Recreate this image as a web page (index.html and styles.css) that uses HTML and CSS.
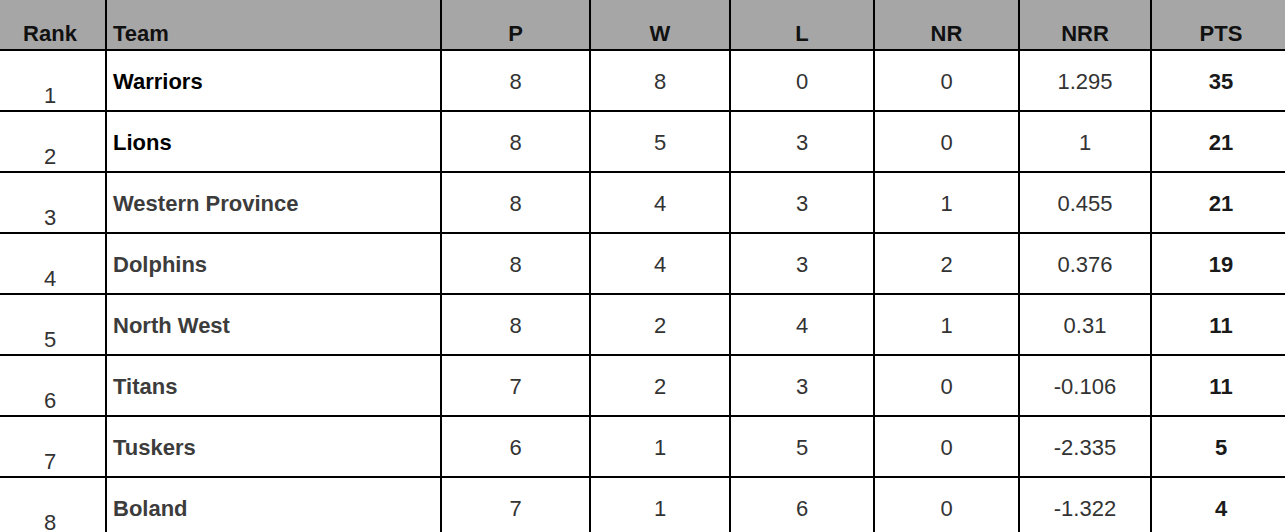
FILE: index.html
```html
<!DOCTYPE html>
<html>
<head>
<meta charset="utf-8">
<link rel="stylesheet" href="styles.css">
</head>
<body>
<table class="standings">
  <colgroup>
    <col class="c-rank"><col class="c-team"><col class="c-p"><col class="c-w"><col class="c-l"><col class="c-nr"><col class="c-nrr"><col class="c-pts">
  </colgroup>
  <thead>
    <tr>
      <th class="rank">Rank</th><th class="team">Team</th><th>P</th><th>W</th><th>L</th><th>NR</th><th>NRR</th><th class="pts">PTS</th>
    </tr>
  </thead>
  <tbody>
    <tr><td class="rank">1</td><td class="team top">Warriors</td><td>8</td><td>8</td><td>0</td><td>0</td><td>1.295</td><td class="pts">35</td></tr>
    <tr><td class="rank">2</td><td class="team top">Lions</td><td>8</td><td>5</td><td>3</td><td>0</td><td>1</td><td class="pts">21</td></tr>
    <tr><td class="rank">3</td><td class="team">Western Province</td><td>8</td><td>4</td><td>3</td><td>1</td><td>0.455</td><td class="pts">21</td></tr>
    <tr><td class="rank">4</td><td class="team">Dolphins</td><td>8</td><td>4</td><td>3</td><td>2</td><td>0.376</td><td class="pts">19</td></tr>
    <tr><td class="rank">5</td><td class="team">North West</td><td>8</td><td>2</td><td>4</td><td>1</td><td>0.31</td><td class="pts">11</td></tr>
    <tr><td class="rank">6</td><td class="team">Titans</td><td>7</td><td>2</td><td>3</td><td>0</td><td>-0.106</td><td class="pts">11</td></tr>
    <tr><td class="rank">7</td><td class="team">Tuskers</td><td>6</td><td>1</td><td>5</td><td>0</td><td>-2.335</td><td class="pts">5</td></tr>
    <tr><td class="rank">8</td><td class="team">Boland</td><td>7</td><td>1</td><td>6</td><td>0</td><td>-1.322</td><td class="pts">4</td></tr>
  </tbody>
</table>
</body>
</html>
```

FILE: styles.css
```css
html, body {
  margin: 0;
  padding: 0;
  background: #fff;
}
body {
  font-family: "Liberation Sans", Arial, sans-serif;
  font-size: 22px;
  overflow: hidden;
}
.standings {
  border-collapse: collapse;
  table-layout: fixed;
  width: 1285px;
}
.c-rank { width: 106px; }
.c-team { width: 335px; }
.c-p { width: 149px; }
.c-w { width: 140px; }
.c-l { width: 144px; }
.c-nr { width: 145px; }
.c-nrr { width: 132px; }
.c-pts { width: 134px; }

.standings th,
.standings td {
  border: 2px solid #000;
  text-align: center;
  padding: 0;
  line-height: 25px;
}
.standings tr > :first-child { border-left: none; }
.standings tr > :last-child { border-right: none; }
.standings thead tr {
  height: 50px;
}
.standings thead th {
  border-top: none;
  background: #a6a6a6;
  color: #111;
  font-weight: bold;
  vertical-align: bottom;
  padding-bottom: 3px;
}
.standings tbody tr {
  height: 61px;
}
.standings tbody td {
  color: #333;
  vertical-align: middle;
  padding-top: 1px;
}
.standings .rank {
  padding-right: 5px;
}
.standings td.rank {
  vertical-align: bottom;
  padding-bottom: 2px;
  color: #333;
}
.standings .team {
  text-align: left;
  padding-left: 6px;
}
.standings td.team {
  font-weight: bold;
  color: #3c3c3c;
}
.standings td.team.top {
  color: #000;
}
.standings .pts {
  padding-left: 5px;
}
.standings td.pts {
  font-weight: bold;
  color: #1a1a1a;
}
```
